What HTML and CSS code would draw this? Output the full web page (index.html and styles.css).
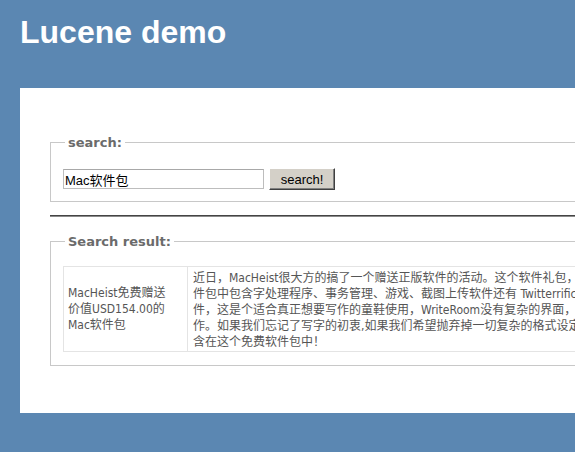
FILE: index.html
```html
<!DOCTYPE html>
<html lang="zh-CN">
<head>
<meta charset="utf-8">
<title>Lucene demo</title>
<link rel="stylesheet" href="styles.css">
</head>
<body>
<header class="masthead">
  <h1 class="site-title">Lucene demo</h1>
</header>
<main class="page">
  <fieldset class="box">
    <legend class="box-title">search:</legend>
    <form class="search-row">
      <input class="search-input" type="text" value="Mac软件包">
      <button class="search-btn" type="button">search!</button>
    </form>
  </fieldset>
  <hr class="divider">
  <fieldset class="box">
    <legend class="box-title">Search result:</legend>
    <table class="results">
      <tr>
        <td class="res-title">MacHeist免费赠送<br>价值USD154.00的<br>Mac软件包</td>
        <td class="res-body">近日，MacHeist很大方的搞了一个赠送正版软件的活动。这个软件礼包，价值154美元，该软<br>件包中包含字处理程序、事务管理、游戏、截图上传软件还有 Twitterrific 等。其中有写作软<br>件，这是个适合真正想要写作的童鞋使用，WriteRoom没有复杂的界面，只有纯粹的写<br>作。如果我们忘记了写字的初衷,如果我们希望抛弃掉一切复杂的格式设定，WriteRoom就包<br>含在这个免费软件包中！</td>
      </tr>
    </table>
  </fieldset>
</main>
</body>
</html>
```

FILE: styles.css
```css
html {
  overflow: hidden;
}

body {
  margin: 0;
  background: #5b87b2;
  font-family: "Liberation Sans", "Noto Sans CJK SC", sans-serif;
}

.masthead {
  padding: 14px 0 38px 20px;
}

.site-title {
  margin: 0;
  font-family: "Liberation Sans", Arial, sans-serif;
  font-size: 32px;
  line-height: 36px;
  font-weight: bold;
  color: #ffffff;
}

.page {
  display: block;
  width: 1000px;
  margin-left: 20px;
  padding: 46px 0 47px 30px;
  background: #ffffff;
  box-sizing: border-box;
}

.box {
  margin: 0;
  padding: 17px 12px 11px;
  border: 1px solid #c8c8c8;
  min-inline-size: 0;
}

.box + .divider + .box {
  padding: 16px 12px 13px;
}

.box-title {
  margin-left: 2px;
  padding: 0 3px;
  font-family: "DejaVu Sans", Verdana, sans-serif;
  font-size: 13px;
  line-height: 17px;
  font-weight: bold;
  color: #6b6b6b;
}

.search-row {
  display: flex;
  align-items: center;
  gap: 5px;
  margin: 0;
}

.search-input {
  width: 201px;
  height: 20px;
  box-sizing: border-box;
  margin: 0;
  padding: 0 1px;
  border: 1px solid #bdbdbd;
  border-top-color: #a8a8a8;
  font-family: "Liberation Sans", "Noto Sans CJK SC", sans-serif;
  font-size: 13px;
  color: #000;
  background: #fff;
  outline: none;
}

.search-btn {
  width: 66px;
  height: 22px;
  box-sizing: border-box;
  margin: 0;
  padding: 0;
  background: #d4d0c8;
  border: 1px solid;
  border-color: #ffffff #404040 #404040 #ffffff;
  box-shadow: inset -1px -1px 0 #808080;
  font-family: "Liberation Sans", Arial, sans-serif;
  font-size: 13px;
  color: #000;
}

.divider {
  height: 0;
  margin: 13px 0 16px;
  border: 0;
  border-top: 1px solid #444444;
  border-bottom: 1px solid #8a8a8a;
}

.results {
  border-collapse: separate;
  border-spacing: 0;
  border: 1px solid #e4e4e4;
  font-family: "DejaVu Sans Condensed", "Liberation Sans", "Noto Sans CJK SC", sans-serif;
  font-size: 12px;
  line-height: 16px;
  color: #555555;
}

.res-title {
  width: 114px;
  padding: 0 5px 0 4px;
  border-right: 1px solid #e4e4e4;
  vertical-align: middle;
}

.res-body {
  padding: 3px 5px 1px;
  white-space: nowrap;
  vertical-align: top;
}
```
